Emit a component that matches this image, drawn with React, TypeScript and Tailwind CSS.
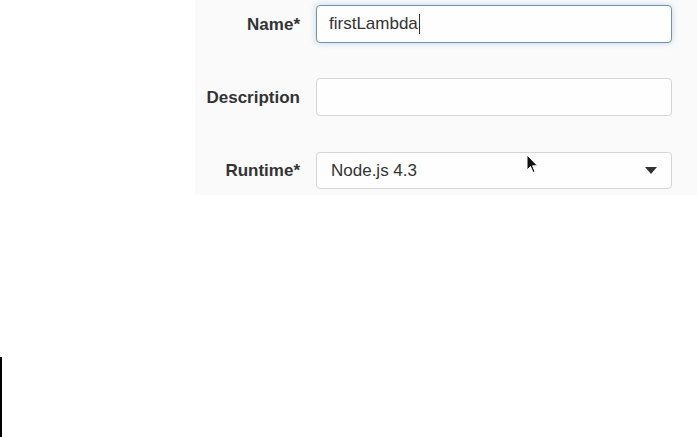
import React from "react";

const font = { fontFamily: '"Liberation Sans", Arial, Helvetica, sans-serif' };

function Label({ children }: { children: React.ReactNode }) {
  return (
    <div className="w-[105px] shrink-0 text-right text-[17px] font-bold text-[#333333] leading-none">
      {children}
    </div>
  );
}

export default function App() {
  return (
    <div className="relative w-[697px] h-[437px] bg-white overflow-hidden" style={font}>
      <div className="ml-[195px] w-[502px] h-[195px] bg-[#fafafa] pt-[5px]">
        <div className="flex items-center gap-[16px] h-[38px]">
          <Label>Name*</Label>
          <div className="w-[356px] h-[38px] rounded-[4px] border border-[#7391a8] bg-[#fefefe] shadow-[0_0_6px_rgba(102,160,210,0.4)] flex items-center pl-[12px] text-[17px] text-[#333333]">
            <span>firstLambda</span>
            <span className="ml-[1px] w-[1px] h-[20px] bg-[#333333]" />
          </div>
        </div>
        <div className="flex items-center gap-[16px] h-[38px] mt-[35px]">
          <Label>Description</Label>
          <div className="w-[356px] h-[38px] rounded-[4px] border border-[#d6d6d6] bg-[#fefefe]" />
        </div>
        <div className="flex items-center gap-[16px] h-[37px] mt-[36px]">
          <Label>Runtime*</Label>
          <div className="w-[356px] h-[37px] rounded-[4px] border border-[#d6d6d6] bg-[#fefefe] flex items-center justify-between pl-[14px] pr-[14px] text-[17px] text-[#333333]">
            <span>Node.js 4.3</span>
            <svg width="12" height="7" viewBox="0 0 12 7">
              <polygon points="0,0 12,0 6,7" fill="#333333" />
            </svg>
          </div>
        </div>
      </div>
      <div className="mt-[162px] w-[2px] h-[80px] bg-black" />
      <svg
        className="absolute left-[526px] top-[154px]"
        width="13"
        height="21"
        viewBox="0 0 13 21"
      >
        <path
          d="M1 1 L1 16 L4.5 12.5 L7 18.5 L9 17.7 L6.6 11.8 L11.5 11.8 Z"
          fill="#111"
          stroke="#fff"
          strokeWidth="1"
          strokeLinejoin="round"
        />
      </svg>
    </div>
  );
}
